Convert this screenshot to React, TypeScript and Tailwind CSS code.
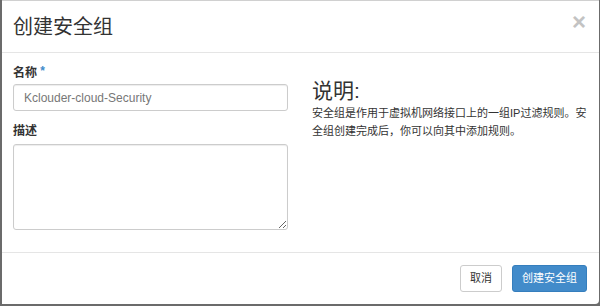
const App = () => {
  return (
    <div
      className="w-[600px] h-[306px] bg-[#6b6b6b] overflow-hidden"
      style={{ fontFamily: '"Liberation Sans", "Noto Sans CJK SC", sans-serif' }}
    >
      <div className="w-[597px] h-[304px] ml-[2px] bg-white rounded-br-[4px] border-t border-[#d0d0d0] flex flex-col text-[#333]">
        <div className="h-[52px] flex items-center justify-between pl-[11px] pr-[13px] border-b border-[#e5e5e5]">
          <h3 className="text-[20px] leading-[24px] pt-[1px]">创建安全组</h3>
          <span className="text-[24px] font-bold text-[#c3c3c3] leading-none -mt-[10px]">×</span>
        </div>
        <div className="flex-1 flex pl-[11px] pt-[12px] border-b border-[#e5e5e5]">
          <div className="w-[275px] flex flex-col">
            <label className="text-[12px] font-bold leading-[16px] mb-[3px]">
              名称 <span className="text-[#428bca] align-top relative -top-[2px]">*</span>
            </label>
            <div className="h-[27px] border border-[#ccc] rounded-[3px] shadow-[inset_0_1px_1px_rgba(0,0,0,0.075)] flex items-center px-[10px] text-[12px] text-[#777]">
              Kclouder-cloud-Security
            </div>
            <label className="text-[12px] font-bold leading-[16px] mt-[12px] mb-[5px]">描述</label>
            <textarea className="h-[86px] border border-[#ccc] rounded-[3px] shadow-[inset_0_1px_1px_rgba(0,0,0,0.075)] resize-y outline-none" />
          </div>
          <div className="ml-[24px] pt-[14px] pr-[4px] flex-1">
            <h3 className="text-[21px] leading-[24px] mb-[1px]">说明:</h3>
            <p className="text-[11px] leading-[18px] text-[#333]">
              安全组是作用于虚拟机网络接口上的一组IP过滤规则。安全组创建完成后，你可以向其中添加规则。
            </p>
          </div>
        </div>
        <div className="h-[51px] flex items-center justify-end gap-[10px] pr-[12px]">
          <button className="h-[27px] px-[9px] border border-[#ccc] rounded-[3px] text-[11px] bg-white text-[#333]">
            取消
          </button>
          <button className="h-[27px] px-[9px] border border-[#357ebd] rounded-[3px] text-[11px] bg-[#428bca] text-white">
            创建安全组
          </button>
        </div>
      </div>
    </div>
  );
};

export default App;
